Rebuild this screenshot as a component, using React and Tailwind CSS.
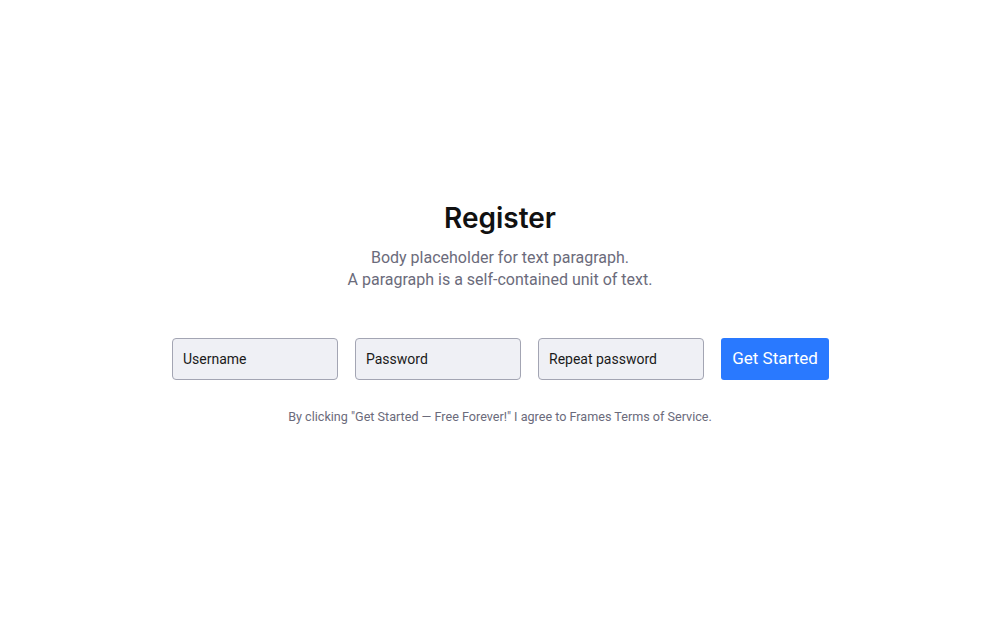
export default function App() {
  return (
    <div
      className="flex h-[625px] w-[1000px] flex-col items-center justify-center bg-white pt-[2px]"
      style={{ fontFamily: "Roboto, 'Liberation Sans', sans-serif" }}
    >
      <h1
        className="text-[28px] font-semibold leading-[34px] text-[#111111]"
        style={{ fontFamily: "Inter, Roboto, sans-serif" }}
      >
        Register
      </h1>
      <p className="mt-3 text-center text-[16px] leading-[22px] text-[#6b6b7b]">
        Body placeholder for text paragraph.
        <br />
        A paragraph is a self-contained unit of text.
      </p>
      <form className="ml-[1px] mt-[47px] flex gap-[17px]" onSubmit={(e) => e.preventDefault()}>
        <input
          type="text"
          placeholder="Username"
          className="h-[42px] w-[166px] rounded-[4px] border border-[#a3a5b3] bg-[#eff0f5] px-[10px] text-[14px] text-[#1a1a1a] outline-none placeholder:text-[#1a1a1a]"
        />
        <input
          type="password"
          placeholder="Password"
          className="h-[42px] w-[166px] rounded-[4px] border border-[#a3a5b3] bg-[#eff0f5] px-[10px] text-[14px] text-[#1a1a1a] outline-none placeholder:text-[#1a1a1a]"
        />
        <input
          type="password"
          placeholder="Repeat password"
          className="h-[42px] w-[166px] rounded-[4px] border border-[#a3a5b3] bg-[#eff0f5] px-[10px] text-[14px] text-[#1a1a1a] outline-none placeholder:text-[#1a1a1a]"
        />
        <button
          type="submit"
          className="h-[42px] w-[108px] rounded-[3px] bg-[#2979ff] text-[17px] font-normal text-white"
        >
          Get Started
        </button>
      </form>
      <p className="mt-[28px] text-[12.6px] leading-[18px] text-[#6b6b7b]">
        By clicking "Get Started — Free Forever!" I agree to Frames Terms of Service.
      </p>
    </div>
  );
}
